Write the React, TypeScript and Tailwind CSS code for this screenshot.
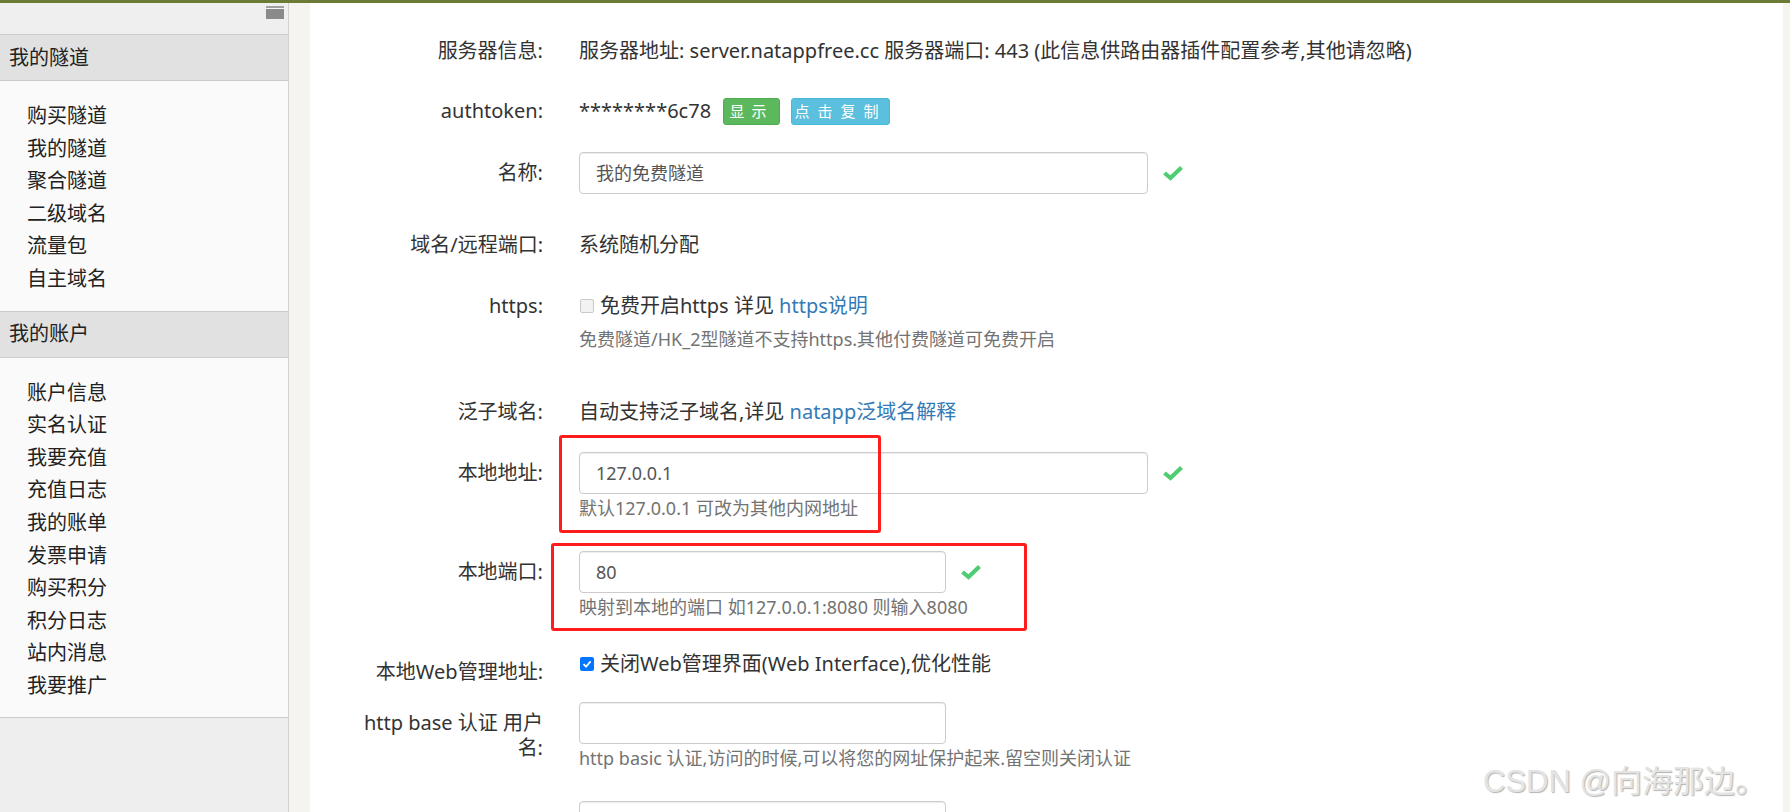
import React from "react";

const Check = () => (
  <svg width="20" height="16" viewBox="0 0 20 16" className="shrink-0 ml-[15px]">
    <path d="M1.5 8 L7.5 13 L18.5 2.5" fill="none" stroke="#50cc72" strokeWidth="4.2" strokeLinejoin="miter" />
  </svg>
);

const Input = ({ w, value }: { w: string; value?: string }) => (
  <div
    className={`${w} h-[42px] shrink-0 border border-[#cccccc] rounded-[4px] bg-white shadow-[inset_0_1px_1px_rgba(0,0,0,0.075)] px-[16px] flex items-center text-[18px] text-[#555555]`}
  >
    {value}
  </div>
);

const Help = ({ children }: { children: React.ReactNode }) => (
  <div className="mt-[2px] text-[18px] leading-[24px] text-[#737373] whitespace-nowrap">{children}</div>
);

const Label = ({ children, cls = "" }: { children: React.ReactNode; cls?: string }) => (
  <div className={`w-[190px] ml-[43px] shrink-0 text-right text-[20px] text-[#333333] ${cls}`}>{children}</div>
);

const tunnelItems = ["购买隧道", "我的隧道", "聚合隧道", "二级域名", "流量包", "自主域名"];
const accountItems = ["账户信息", "实名认证", "我要充值", "充值日志", "我的账单", "发票申请", "购买积分", "积分日志", "站内消息", "我要推广"];

export default function App() {
  return (
    <div className="relative w-[1790px] h-[812px] overflow-hidden bg-[#f6f4ee] font-['Noto_Sans','Noto_Sans_CJK_SC',sans-serif] text-[#333333]">
      <div className="h-[3px] bg-[#6b7a34]" />
      <div className="flex h-[809px]">
        {/* Sidebar */}
        <div className="w-[289px] shrink-0 flex flex-col border-r border-[#d2d2d2] bg-[#eeeeee]">
          <div className="h-[32px] border-b border-[#cccccc] bg-[#efefef] flex justify-end pr-[4px] pt-[3px]">
            <div className="w-[18px] h-[13px] flex flex-col">
              <div className="h-[2px] bg-[#a0a0a0]" />
              <div className="h-[1px] bg-[#f4f4f4]" />
              <div className="h-[10px] bg-[#8a8a8a]" />
            </div>
          </div>
          <div className="h-[46px] border-b border-[#cccccc] bg-[#e1e1e1] flex items-center pl-[9px] text-[20px] text-[#222]">我的隧道</div>
          <div className="bg-[#fafafa] pt-[19px] pb-[15px] pl-[27px]">
            {tunnelItems.map((t) => (
              <div key={t} className="h-[32.6px] leading-[32.6px] text-[20px] text-[#222]">{t}</div>
            ))}
          </div>
          <div className="h-[47px] border-y border-[#cccccc] bg-[#e1e1e1] flex items-center pl-[9px] text-[20px] text-[#222]">我的账户</div>
          <div className="bg-[#fafafa] pt-[19px] pb-[14px] pl-[27px] border-b border-[#cccccc]">
            {accountItems.map((t) => (
              <div key={t} className="h-[32.6px] leading-[32.6px] text-[20px] text-[#222]">{t}</div>
            ))}
          </div>
          <div className="flex-1 bg-[#eeeeee]" />
        </div>

        <div className="w-[21px] shrink-0" />

        {/* Main panel */}
        <div className="w-[1473px] shrink-0 bg-white pt-[34px] text-[20px] leading-[28px]">
          {/* 服务器信息 */}
          <div className="flex items-start">
            <Label>服务器信息:</Label>
            <div className="ml-[36px] whitespace-nowrap">服务器地址: server.natappfree.cc 服务器端口: 443 (此信息供路由器插件配置参考,其他请忽略)</div>
          </div>

          {/* authtoken */}
          <div className="flex items-center mt-[32px] h-[28px]">
            <Label>authtoken:</Label>
            <div className="ml-[36px] flex items-center">
              <span className="whitespace-nowrap">********6c78</span>
              <span className="ml-[12px] w-[57px] h-[27px] rounded-[3px] bg-[#5cb85c] border border-[#4cae4c] text-white text-[15px] tracking-[7px] flex items-center justify-center leading-none">显示</span>
              <span className="ml-[11px] w-[99px] h-[27px] rounded-[3px] bg-[#5bc0de] border border-[#46b8da] text-white text-[15px] tracking-[8px] flex items-center justify-center leading-none">点击复制</span>
            </div>
          </div>

          {/* 名称 */}
          <div className="flex items-center mt-[27px]">
            <Label>名称:</Label>
            <div className="ml-[36px] flex items-center">
              <Input w="w-[569px]" value="我的免费隧道" />
              <Check />
            </div>
          </div>

          {/* 域名 */}
          <div className="flex items-start mt-[37px]">
            <Label>域名/远程端口:</Label>
            <div className="ml-[36px]">系统随机分配</div>
          </div>

          {/* https */}
          <div className="flex items-start mt-[33px]">
            <Label>https:</Label>
            <div className="ml-[36px]">
              <div className="flex items-center h-[28px]">
                <span className="ml-[1px] w-[14px] h-[14px] rounded-[2px] border border-[#c9c9c9] bg-[#f2f2f2] shrink-0" />
                <span className="ml-[6px] whitespace-nowrap">
                  免费开启https 详见 <span className="text-[#337ab7]">https说明</span>
                </span>
              </div>
              <div className="mt-[7px] text-[18px] leading-[24px] text-[#737373] whitespace-nowrap">免费隧道/HK_2型隧道不支持https.其他付费隧道可免费开启</div>
            </div>
          </div>

          {/* 泛子域名 */}
          <div className="flex items-start mt-[47px]">
            <Label>泛子域名:</Label>
            <div className="ml-[36px] whitespace-nowrap">
              自动支持泛子域名,详见 <span className="text-[#337ab7]">natapp泛域名解释</span>
            </div>
          </div>

          {/* 本地地址 */}
          <div className="flex items-start mt-[26px]">
            <Label cls="h-[42px] flex items-center justify-end">本地地址:</Label>
            <div className="ml-[36px]">
              <div className="flex items-center">
                <Input w="w-[569px]" value="127.0.0.1" />
                <Check />
              </div>
              <Help>默认127.0.0.1 可改为其他内网地址</Help>
            </div>
          </div>

          {/* 本地端口 */}
          <div className="flex items-start mt-[31px]">
            <Label cls="h-[42px] flex items-center justify-end">本地端口:</Label>
            <div className="ml-[36px]">
              <div className="flex items-center">
                <Input w="w-[367px]" value="80" />
                <Check />
              </div>
              <Help>映射到本地的端口 如127.0.0.1:8080 则输入8080</Help>
            </div>
          </div>

          {/* Web 管理 */}
          <div className="flex items-start mt-[31px] h-[28px]">
            <Label cls="pt-[8px]">本地Web管理地址:</Label>
            <div className="ml-[36px] flex items-center h-[28px]">
              <span className="ml-[1px] w-[14px] h-[14px] rounded-[2px] bg-[#0075ff] shrink-0 flex items-center justify-center">
                <svg width="10" height="10" viewBox="0 0 10 10">
                  <path d="M1.5 5.2 L4 7.6 L8.6 2.4" fill="none" stroke="white" strokeWidth="1.8" />
                </svg>
              </span>
              <span className="ml-[6px] whitespace-nowrap">关闭Web管理界面(Web Interface),优化性能</span>
            </div>
          </div>

          {/* http base */}
          <div className="flex items-start mt-[24px]">
            <Label cls="pt-[8px] leading-[25px]">http base 认证 用户名:</Label>
            <div className="ml-[36px]">
              <Input w="w-[367px]" />
              <Help>http basic 认证,访问的时候,可以将您的网址保护起来.留空则关闭认证</Help>
            </div>
          </div>

          <div className="flex items-start mt-[31px]">
            <Label> </Label>
            <div className="ml-[36px]">
              <Input w="w-[367px]" />
            </div>
          </div>
        </div>

        <div className="flex-1" />
      </div>

      {/* annotation boxes */}
      <div className="absolute left-[559px] top-[435px] w-[322px] h-[98px] border-[3px] border-[#ff1c1c] rounded-[3px]" />
      <div className="absolute left-[551px] top-[543px] w-[476px] h-[88px] border-[3px] border-[#ff1c1c] rounded-[3px]" />

      {/* watermark */}
      <div className="absolute left-[1483px] top-[762px] text-[31px] leading-[40px] whitespace-nowrap text-[#e4e4e4] font-['Liberation_Sans','Noto_Sans_CJK_SC',sans-serif] [text-shadow:1px_1px_1px_rgba(0,0,0,0.3)]">
        CSDN @向海那边。
      </div>
    </div>
  );
}
